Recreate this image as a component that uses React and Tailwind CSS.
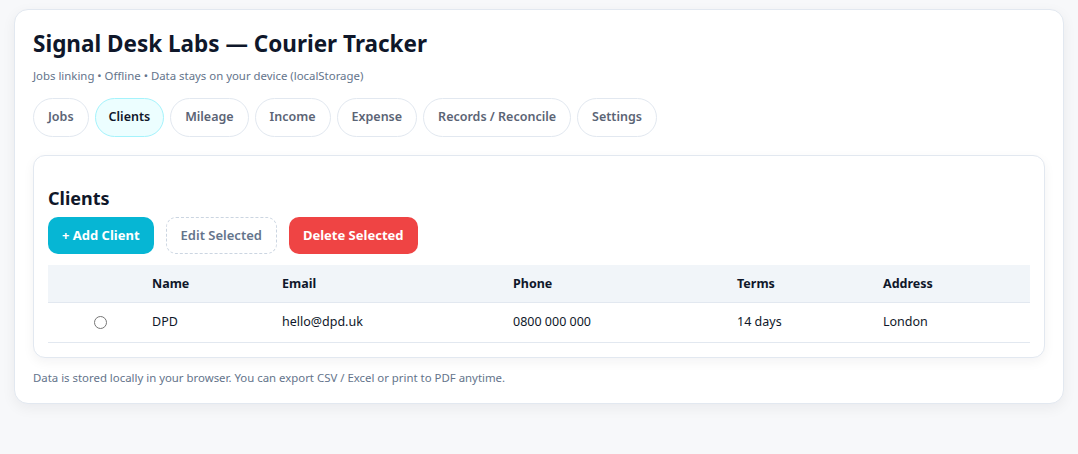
const tabs = ["Jobs", "Clients", "Mileage", "Income", "Expense", "Records / Reconcile", "Settings"];

const clients = [
  { name: "DPD", email: "hello@dpd.uk", phone: "0800 000 000", terms: "14 days", address: "London" },
];

export default function App() {
  return (
    <div className="min-h-[454px] bg-[#f7f8fa] pt-[9px] px-[14px] pb-12 text-[#0f172a]" style={{ fontFamily: '"Noto Sans", "Open Sans", sans-serif' }}>
      <div className="rounded-[14px] border border-[#e2e8f0] bg-white px-[18px] pt-[18px] pb-[17px] shadow-[0_4px_14px_rgba(15,23,42,0.06)]">
        <h1 className="text-[22.5px] font-bold leading-[32px] text-[#0f172a]">Signal Desk Labs — Courier Tracker</h1>
        <div className="mt-[8px] text-[11.4px] leading-[16px] text-[#64748b]">
          Jobs linking • Offline • Data stays on your device (localStorage)
        </div>

        <div className="mt-[14px] flex gap-[6px]">
          {tabs.map((t) => (
            <button
              key={t}
              className={
                t === "Clients"
                  ? "h-[39px] rounded-full border border-[#a5f3fc] bg-[#ecfeff] px-[13px] text-[12.5px] font-semibold text-[#0f172a]"
                  : "h-[39px] rounded-full border border-[#e2e8f0] bg-white px-[14px] text-[12.5px] font-semibold text-[#5b6475]"
              }
            >
              {t}
            </button>
          ))}
        </div>

        <div className="mt-[18px] rounded-[12px] border border-[#e2e8f0] bg-white px-[14px] pt-[30px] pb-[14px] shadow-[0_4px_12px_rgba(15,23,42,0.05)]">
          <h2 className="text-[18px] font-bold leading-[24px] text-[#0f172a]">Clients</h2>
          <div className="mt-[7px] flex gap-3">
            <button className="h-[37px] rounded-[10px] bg-[#06b6d4] px-[14px] text-[13px] font-bold text-white">+ Add Client</button>
            <button className="h-[37px] rounded-[10px] border border-dashed border-[#cbd5e1] bg-white px-[14px] text-[13px] font-semibold text-[#64748b]">Edit Selected</button>
            <button className="h-[37px] rounded-[10px] bg-[#ef4444] px-[14px] text-[13px] font-bold text-white">Delete Selected</button>
          </div>

          <table className="mt-[11px] w-full table-fixed border-collapse text-[12.5px]">
            <colgroup>
              <col className="w-[92px]" />
              <col className="w-[130px]" />
              <col className="w-[231px]" />
              <col className="w-[224px]" />
              <col className="w-[146px]" />
              <col />
            </colgroup>
            <thead>
              <tr className="h-[37px] border-b border-[#e2e8f0] bg-[#f1f5f9] text-left">
                <th className="px-3 pt-[3px]"></th>
                <th className="px-3 pt-[3px] font-bold">Name</th>
                <th className="px-3 pt-[3px] font-bold">Email</th>
                <th className="px-3 pt-[3px] font-bold">Phone</th>
                <th className="px-3 pt-[3px] font-bold">Terms</th>
                <th className="px-3 pt-[3px] font-bold">Address</th>
              </tr>
            </thead>
            <tbody>
              {clients.map((c) => (
                <tr key={c.name} className="h-[40px] border-b border-[#e2e8f0]">
                  <td className="px-3 text-center">
                    <span className="inline-block h-[13px] w-[13px] translate-x-[6px] translate-y-[3px] rounded-full border border-[#767676] bg-white" />
                  </td>
                  <td className="px-3">{c.name}</td>
                  <td className="px-3">{c.email}</td>
                  <td className="px-3">{c.phone}</td>
                  <td className="px-3">{c.terms}</td>
                  <td className="px-3">{c.address}</td>
                </tr>
              ))}
            </tbody>
          </table>
        </div>

        <div className="mt-[12px] text-[11.4px] leading-[16px] text-[#64748b]">
          Data is stored locally in your browser. You can export CSV / Excel or print to PDF anytime.
        </div>
      </div>
    </div>
  );
}
